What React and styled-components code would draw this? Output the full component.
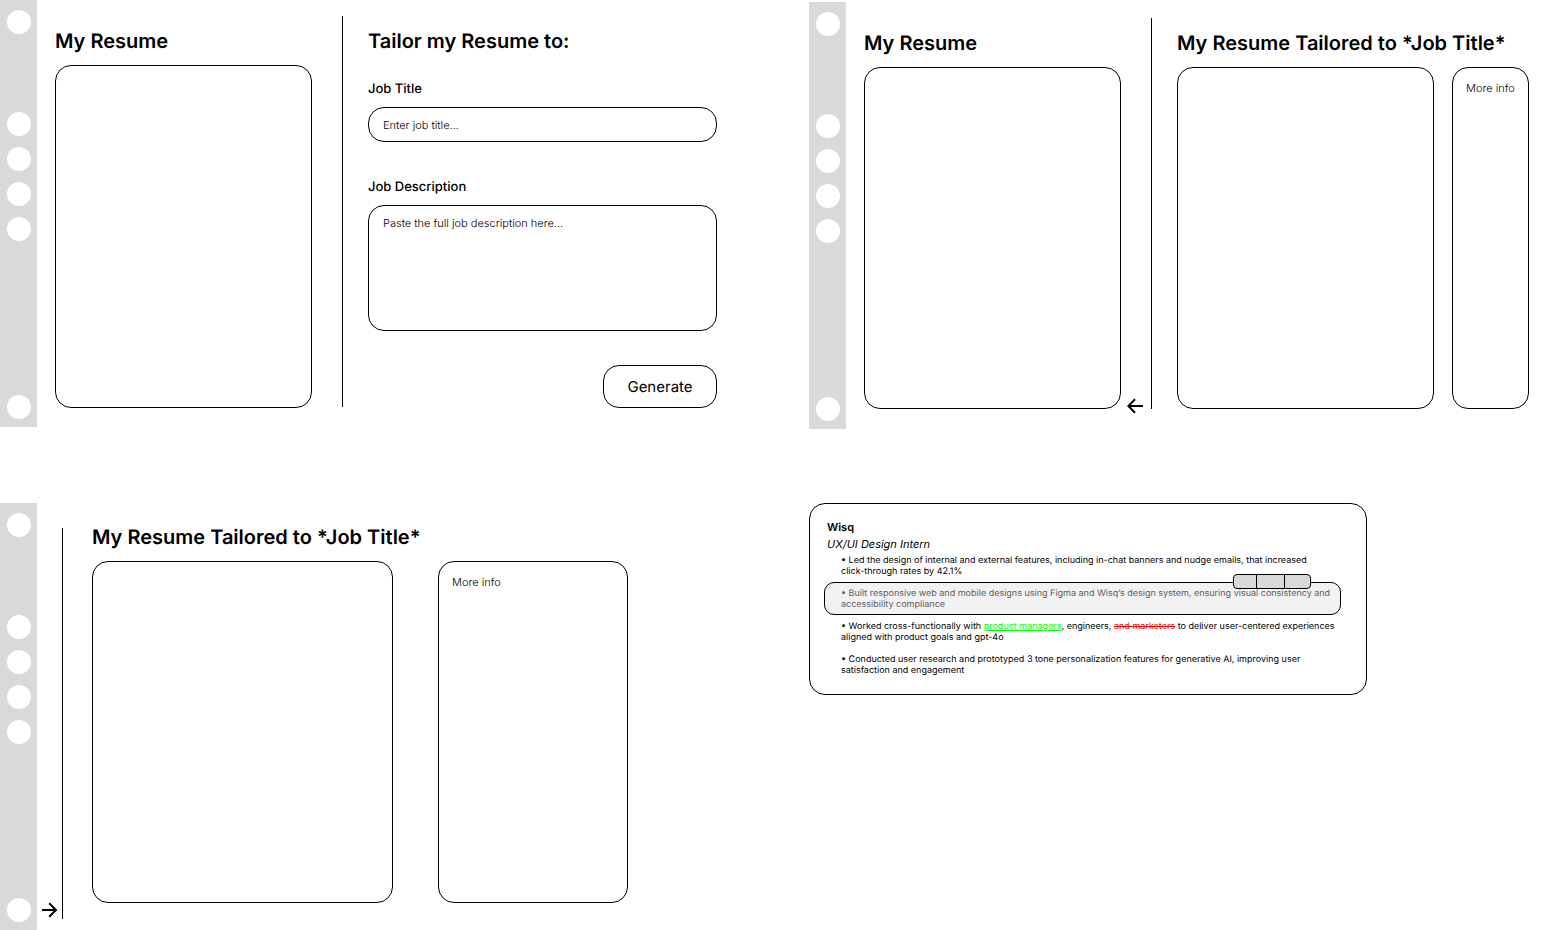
import React, { useState } from 'react'
import styled, { createGlobalStyle, css } from 'styled-components'

const GlobalStyle = createGlobalStyle`
  * {
    box-sizing: border-box;
  }
  body {
    margin: 0;
    background: #fff;
    color: #000;
    font-family: Inter, "Liberation Sans", sans-serif;
    text-rendering: geometricPrecision;
  }
  button, input, textarea {
    font-family: inherit;
    color: inherit;
    text-rendering: inherit;
  }
`
const Board = styled.main`
  display: grid;
  grid-template-columns: 809fr 735fr;
  row-gap: 74px;
  align-items: start;
`
const Screen = styled.section`
  display: grid;
  grid-template-columns: ${({ $columns }) => $columns};
  min-height: 427px;
  margin-top: ${({ $top }) => $top || 0}px;
`
const Sidebar = styled.nav`
  display: flex;
  flex-direction: column;
  align-items: center;
  gap: 11px;
  padding: 10px 0 8px 1px;
  background: #d9d9d9;
`
const Dot = styled.button`
  width: 24px;
  height: 24px;
  padding: 0;
  border: 0;
  border-radius: 50%;
  background: #fff;
  cursor: pointer;

  &:first-child {
    margin-bottom: 67px;
  }
  &:last-child {
    margin-top: auto;
  }
`
const Column = styled.div`
  display: flex;
  flex-direction: column;
  min-width: 0;
  padding: ${({ $pad }) => $pad};
`
const Heading = styled.h2`
  margin: 0 0 12px;
  font-size: 20px;
  font-weight: 600;
  line-height: 24px;
  white-space: nowrap;
`
const outline = css`
  border: 1px solid #000;
  border-radius: 16px;
  background: #fff;
`
const Sheet = styled.div`
  ${outline}
  flex: 1;
  min-width: 0;
`
const InfoSheet = styled(Sheet)`
  padding: 13px 0 0 13px;
  font-size: 11px;
  font-weight: 300;
  line-height: 14px;
  white-space: nowrap;
`
const SheetRow = styled.div`
  display: grid;
  grid-template-columns: ${({ $columns }) => $columns};
  flex: 1;
  gap: ${({ $gap }) => $gap}px;
`
const Divider = styled.div`
  margin: ${({ $margin }) => $margin};
  background: #000;
`
const Gutter = styled.div`
  display: flex;
  align-items: flex-end;
  padding: ${({ $pad }) => $pad || 0};
`
const ArrowButton = styled.button`
  display: block;
  width: 16px;
  height: 16px;
  padding: 0;
  border: 0;
  background: none;
  cursor: pointer;

  svg {
    display: block;
  }
`
const Form = styled.form`
  display: flex;
  flex-direction: column;
`
const Label = styled.label`
  margin-bottom: 10px;
  font-size: 13px;
  font-weight: 500;
  line-height: 16px;
`
const field = css`
  ${outline}
  width: 100%;
  font-size: 11px;
  font-weight: 300;
  line-height: 14px;
  outline: none;

  &::placeholder {
    color: #000;
    opacity: 1;
  }
`
const TitleInput = styled.input`
  ${field}
  height: 35px;
  margin-bottom: 37px;
  padding: 0 14px;
`
const DescriptionArea = styled.textarea`
  ${field}
  display: block;
  height: 126px;
  padding: 10px 14px;
  resize: none;
`
const GenerateButton = styled.button`
  ${outline}
  align-self: flex-end;
  width: 114px;
  height: 43px;
  margin-top: 34px;
  padding: 0;
  font-size: 15px;
  cursor: pointer;
`
const FormHeading = styled(Heading)`
  margin-bottom: 28px;
`
const Experience = styled.article`
  ${outline}
  width: 76%;
  max-width: 558px;
  padding: 15px 25px 18px 14px;
`
const Company = styled.h3`
  margin: 0;
  padding-left: 3px;
  font-size: 11px;
  font-weight: 600;
  line-height: 17px;
`
const Role = styled.p`
  margin: 0 0 2px;
  padding-left: 3px;
  font-size: 11px;
  font-style: italic;
  line-height: 17px;
`
const Bullets = styled.ul`
  display: flex;
  flex-direction: column;
  gap: 11px;
  margin: 0;
  padding: 0;
  list-style: none;
  font-size: 9px;
  line-height: 11px;
`
const Bullet = styled.li`
  padding-left: 17px;

  &::before {
    content: '• ';
  }
`
/* the selected bullet grows into the gaps around it */
const SelectedBullet = styled(Bullet)`
  position: relative;
  margin: -6px 0 -5px;
  padding: 5px 0 4px 16px;
  border: 1px solid #000;
  border-radius: 10px;
  background: #f2f2f2;
  color: #5c5c5c;
`
const Toolbar = styled.div`
  position: absolute;
  top: -9px;
  right: 29px;
  display: grid;
  grid-template-columns: 22px 28px 1fr;
  width: 78px;
  height: 15px;
  border: 1px solid #000;
  border-radius: 4px;
  background: #d9d9d9;
`
const ToolButton = styled.button`
  padding: 0;
  border: 0;
  background: none;
  cursor: pointer;

  & + & {
    border-left: 1px solid #000;
  }
`
const Added = styled.ins`
  color: #0f0;
  text-decoration: underline;
`
const Removed = styled.del`
  color: #f00;
  text-decoration: line-through;
`
const NoBreak = styled.span`
  white-space: nowrap;
`

const NAV_ITEMS = ['Menu', 'Home', 'Resumes', 'Jobs', 'Saved', 'Account']

const SideNav = () => (
  <Sidebar>
    {NAV_ITEMS.map((item) => (
      <Dot key={item} type="button" aria-label={item} />
    ))}
  </Sidebar>
)

const Arrow = ({ direction }) => (
  <ArrowButton type="button" aria-label={direction === 'left' ? 'Collapse' : 'Expand'}>
    <svg width="16" height="16" viewBox="0 0 16 16" fill="none" stroke="#000" strokeWidth="2">
      {direction === 'left' ? (
        <path d="M16 8H1.5M8 1.2L1.3 8L8 14.8" />
      ) : (
        <path d="M0 8H14.5M7.2 1.2L14 8L7.2 14.8" />
      )}
    </svg>
  </ArrowButton>
)

const TailorForm = () => {
  const [title, setTitle] = useState('')
  const [description, setDescription] = useState('')

  return (
    <Form onSubmit={(event) => event.preventDefault()}>
      <FormHeading>Tailor my Resume to:</FormHeading>
      <Label htmlFor="job-title">Job Title</Label>
      <TitleInput
        id="job-title"
        type="text"
        placeholder="Enter job title..."
        value={title}
        onChange={(e) => setTitle(e.target.value)}
      />
      <Label htmlFor="job-description">Job Description</Label>
      <DescriptionArea
        id="job-description"
        placeholder="Paste the full job description here..."
        value={description}
        onChange={(e) => setDescription(e.target.value)}
      />
      <GenerateButton type="submit">Generate</GenerateButton>
    </Form>
  )
}

const ExperienceCard = () => (
  <Experience>
    <Company>Wisq</Company>
    <Role>UX/UI Design Intern</Role>
    <Bullets>
      <Bullet>
        Led the design of internal and external features, including in-chat banners and nudge emails, that increased{' '}
        <NoBreak>click-through</NoBreak> rates by 42.1%
      </Bullet>
      <SelectedBullet>
        Built responsive web and mobile designs using Figma and Wisq’s design system, ensuring visual consistency and
        accessibility compliance
        <Toolbar>
          <ToolButton type="button" aria-label="Accept" />
          <ToolButton type="button" aria-label="Edit" />
          <ToolButton type="button" aria-label="Reject" />
        </Toolbar>
      </SelectedBullet>
      <Bullet>
        Worked cross-functionally with <Added>product managers</Added>, engineers, <Removed>and marketers</Removed> to
        deliver user-centered experiences aligned with product goals and gpt-4o
      </Bullet>
      <Bullet>
        Conducted user research and prototyped 3 tone personalization features for generative AI, improving user
        satisfaction and engagement
      </Bullet>
    </Bullets>
  </Experience>
)

const App = () => (
  <>
    <GlobalStyle />
    <Board>
      <Screen $columns="37px 275fr 30px 26px 441fr">
        <SideNav />
        <Column $pad="29px 0 19px 18px">
          <Heading>My Resume</Heading>
          <Sheet />
        </Column>
        <Gutter />
        <Divider $margin="16px 25px 20px 0" />
        <Column $pad="29px 92px 19px 0">
          <TailorForm />
        </Column>
      </Screen>

      <Screen $top={2} $columns="37px 275fr 30px 26px 367fr">
        <SideNav />
        <Column $pad="29px 0 20px 18px">
          <Heading>My Resume</Heading>
          <Sheet />
        </Column>
        <Gutter $pad="0 0 15px 6px">
          <Arrow direction="left" />
        </Gutter>
        <Divider $margin="16px 25px 20px 0" />
        <Column $pad="29px 15px 20px 0">
          <Heading>My Resume Tailored to *Job Title*</Heading>
          <SheetRow $columns="257fr 77fr" $gap={18}>
            <Sheet />
            <InfoSheet>More info</InfoSheet>
          </SheetRow>
        </Column>
      </Screen>

      <Screen $columns="37px 25px 30px 1fr">
        <SideNav />
        <Gutter $pad="0 0 12px 5px">
          <Arrow direction="right" />
        </Gutter>
        <Divider $margin="25px 29px 11px 0" />
        <Column $pad="22px 181px 27px 0">
          <Heading>My Resume Tailored to *Job Title*</Heading>
          <SheetRow $columns="301fr 190fr" $gap={45}>
            <Sheet />
            <InfoSheet>More info</InfoSheet>
          </SheetRow>
        </Column>
      </Screen>

      <ExperienceCard />
    </Board>
  </>
)

export default App
